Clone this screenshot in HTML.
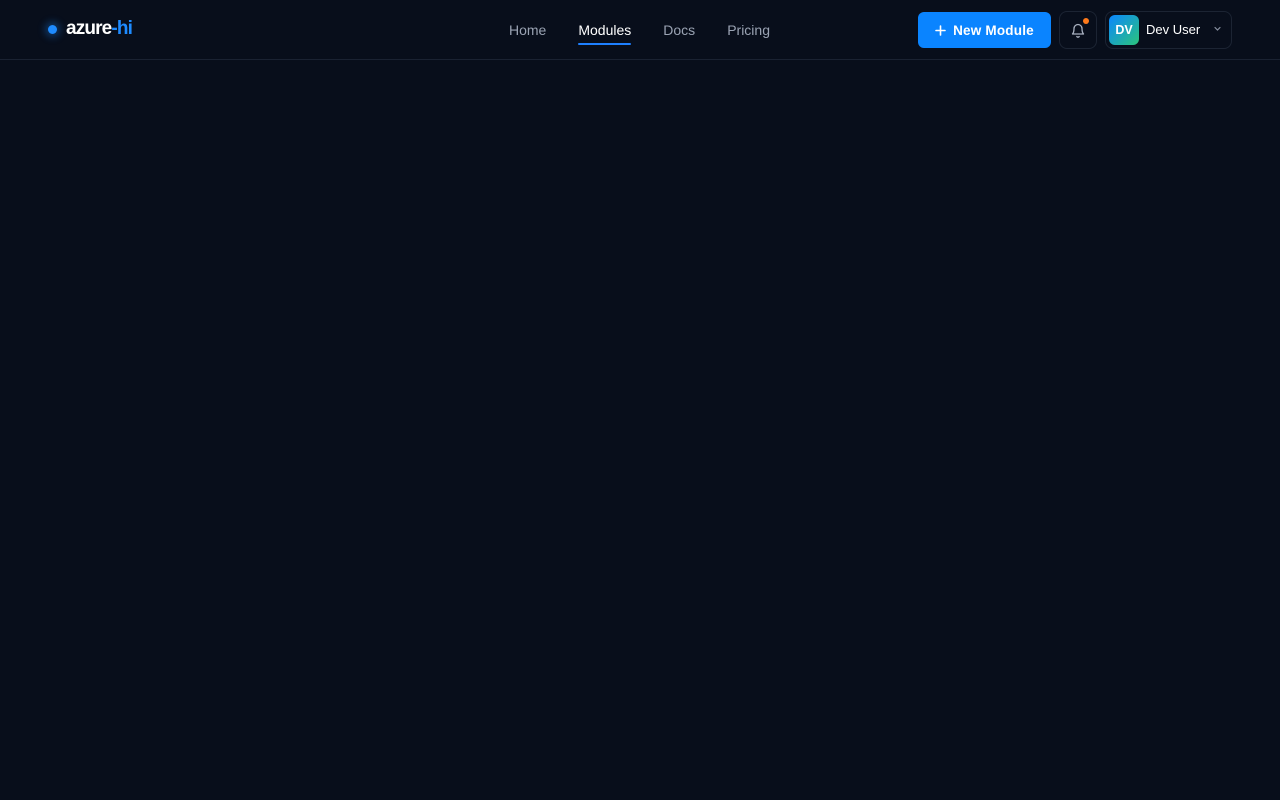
<!DOCTYPE html>
<html><head><meta charset="utf-8"><style>
*{margin:0;padding:0;box-sizing:border-box}
body{width:1280px;height:800px;background:#080e1b;font-family:"Liberation Sans",sans-serif;overflow:hidden}
header{height:60px;border-bottom:1px solid #1a2232;position:relative}
.logo{position:absolute;left:48px;top:18px;display:flex;align-items:center}
.dot{width:9px;height:9px;border-radius:50%;background:#1e8bff;box-shadow:0 0 8px 3px rgba(30,139,255,.35);margin-right:9px}
.logo span{font-size:19px;font-weight:bold;color:#fff;letter-spacing:-0.85px}
.logo b{color:#1e8bff}
nav{position:absolute;left:509px;top:22px;display:flex;gap:32px;font-size:14px;color:#9aa3b3}
nav a{position:relative}
nav a.on{color:#fff}
nav a.on:after{content:"";position:absolute;left:0;right:0;top:21px;height:2px;background:#1e80ff;border-radius:1px}
.btn{position:absolute;left:918px;top:12px;width:133px;height:36px;border-radius:6px;background:#0a84ff;color:#fff;font-size:13.5px;font-weight:bold;display:flex;align-items:center;justify-content:center;gap:7px;letter-spacing:.2px}
.bell{position:absolute;left:1059px;top:11px;width:38px;height:38px;border:1px solid #1c2433;border-radius:8px;display:flex;align-items:center;justify-content:center}
.bell i{position:absolute;right:7px;top:6px;width:6px;height:6px;border-radius:50%;background:#ff7a1a}
.user{position:absolute;left:1105px;top:11px;width:127px;height:38px;border:1px solid #1c2433;border-radius:8px}
.av{position:absolute;left:3px;top:3px;width:30px;height:30px;border-radius:6px;background:linear-gradient(135deg,#0a86ff,#2bc47a);color:#fff;font-size:12.5px;font-weight:bold;display:flex;align-items:center;justify-content:center}
.un{position:absolute;left:40px;top:10px;color:#fff;font-size:13px}
.ch{position:absolute;left:107px;top:12px}
</style></head><body>
<header>
<div class="logo"><div class="dot"></div><span>azure<b>-hi</b></span></div>
<nav><a>Home</a><a class="on">Modules</a><a>Docs</a><a>Pricing</a></nav>
<div class="btn"><svg width="11" height="11" viewBox="0 0 11 11"><path d="M5.5 1v9M1 5.5h9" stroke="#fff" stroke-width="1.6" stroke-linecap="round"/></svg>New Module</div>
<div class="bell"><svg width="16" height="17" viewBox="0 0 16 17" fill="none" stroke="#a8b0bf" stroke-width="1.3" stroke-linecap="round" stroke-linejoin="round"><path d="M4 6.5a4 4 0 0 1 8 0c0 4 1.5 5.5 1.5 5.5h-11S4 10.5 4 6.5z"/><path d="M6.8 14.5a1.4 1.4 0 0 0 2.4 0"/></svg><i></i></div>
<div class="user"><div class="av">DV</div><div class="un">Dev User</div><svg class="ch" width="9" height="9" viewBox="0 0 9 9"><path d="M2 3.5l2.5 2.5L7 3.5" stroke="#8891a0" stroke-width="1.2" fill="none" stroke-linecap="round"/></svg></div>
</header>
</body></html>
